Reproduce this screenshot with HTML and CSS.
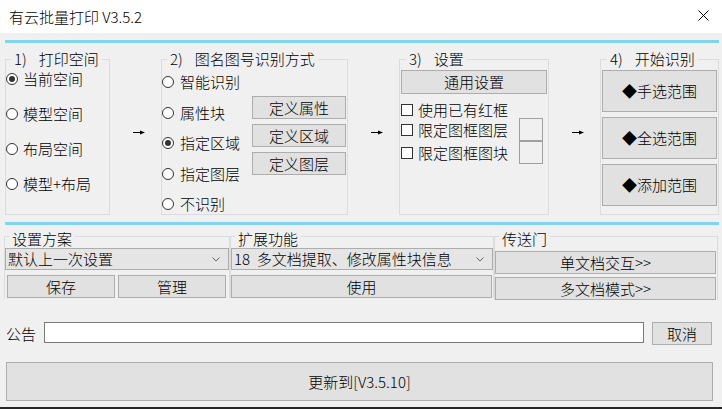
FILE: index.html
```html
<!DOCTYPE html>
<html>
<head>
  <meta charset="utf-8">
  <link rel="stylesheet" href="styles.css">
</head>
<body>
  <div class="titlebar">
    <span class="title">有云批量打印 V3.5.2</span>
    <svg class="close" width="11" height="11" viewBox="0 0 11 11"><path d="M0.5 0.5L10.5 10.5M10.5 0.5L0.5 10.5" stroke="#000" stroke-width="1" fill="none"/></svg>
  </div>

  <div class="main">
    <div class="sep"></div>

    <div class="steps">
      <fieldset class="group g1">
        <legend><span class="num">1)</span>打印空间</legend>
        <div class="g1-body">
          <label class="radio on"><i></i>当前空间</label>
          <label class="radio"><i></i>模型空间</label>
          <label class="radio"><i></i>布局空间</label>
          <label class="radio"><i></i>模型+布局</label>
        </div>
      </fieldset>

      <div class="arrow"><svg width="12" height="5" viewBox="0 0 12 5"><path d="M0 2.5H8" stroke="#000" stroke-width="1"/><path d="M7 0.5L12 2.5L7 4.5Z" fill="#000"/></svg></div>

      <fieldset class="group g2">
        <legend><span class="num">2)</span>图名图号识别方式</legend>
        <div class="g2-body">
          <div class="g2-radios">
            <label class="radio"><i></i>智能识别</label>
            <label class="radio"><i></i>属性块</label>
            <label class="radio on"><i></i>指定区域</label>
            <label class="radio"><i></i>指定图层</label>
            <label class="radio"><i></i>不识别</label>
          </div>
          <div class="g2-btns">
            <button class="btn">定义属性</button>
            <button class="btn">定义区域</button>
            <button class="btn">定义图层</button>
          </div>
        </div>
      </fieldset>

      <div class="arrow"><svg width="12" height="5" viewBox="0 0 12 5"><path d="M0 2.5H8" stroke="#000" stroke-width="1"/><path d="M7 0.5L12 2.5L7 4.5Z" fill="#000"/></svg></div>

      <fieldset class="group g3">
        <legend><span class="num">3)</span>设置</legend>
        <div class="g3-body">
          <button class="btn general">通用设置</button>
          <label class="check first"><i></i>使用已有红框</label>
          <label class="check"><i></i>限定图框图层<span class="slot"></span></label>
          <label class="check"><i></i>限定图框图块<span class="slot"></span></label>
        </div>
      </fieldset>

      <div class="arrow"><svg width="12" height="5" viewBox="0 0 12 5"><path d="M0 2.5H8" stroke="#000" stroke-width="1"/><path d="M7 0.5L12 2.5L7 4.5Z" fill="#000"/></svg></div>

      <fieldset class="group g4">
        <legend><span class="num">4)</span>开始识别</legend>
        <div class="g4-body">
          <button class="btn big">◆手选范围</button>
          <button class="btn big">◆全选范围</button>
          <button class="btn big">◆添加范围</button>
        </div>
      </fieldset>
    </div>

    <div class="sep"></div>

    <div class="tools">
      <fieldset class="group t1">
        <legend>设置方案</legend>
        <div class="combo">
          <span>默认上一次设置</span>
          <svg width="8" height="5" viewBox="0 0 8 5"><path d="M0.5 0.5L4 4L7.5 0.5" stroke="#666" stroke-width="1" fill="none"/></svg>
        </div>
        <div class="pair">
          <button class="btn half">保存</button>
          <button class="btn half">管理</button>
        </div>
      </fieldset>

      <fieldset class="group t2">
        <legend>扩展功能</legend>
        <div class="combo">
          <span>18&nbsp; 多文档提取、修改属性块信息</span>
          <svg width="8" height="5" viewBox="0 0 8 5"><path d="M0.5 0.5L4 4L7.5 0.5" stroke="#666" stroke-width="1" fill="none"/></svg>
        </div>
        <button class="btn use">使用</button>
      </fieldset>

      <fieldset class="group t3">
        <legend>传送门</legend>
        <div class="portal">
          <button class="btn">单文档交互&gt;&gt;</button>
          <button class="btn">多文档模式&gt;&gt;</button>
        </div>
      </fieldset>
    </div>

    <div class="notice">
      <span class="notice-label">公告</span>
      <div class="notice-box"></div>
      <button class="btn cancel">取消</button>
    </div>

    <button class="btn update">更新到[V3.5.10]</button>
  </div>

  <div class="taskbar"></div>
</body>
</html>
```

FILE: styles.css
```css
* {
  box-sizing: border-box;
}

body {
  margin: 0;
  width: 722px;
  height: 409px;
  overflow: hidden;
  background-color: #f0f0f0;
  font-family: "Noto Sans CJK SC", "Microsoft YaHei", sans-serif;
  font-size: 15px;
  font-weight: 300;
  line-height: 18px;
  color: #000;
}

/* barre de titre */
.titlebar {
  height: 33px;
  background-color: #fff;
  display: flex;
  align-items: center;
  justify-content: space-between;
  padding: 0 13px 0 9px;
}

.close {
  margin-top: -2px;
}

.main {
  padding-left: 5px;
}

.sep {
  width: 714px;
  height: 3px;
  margin-top: 7px;
  background-color: #80d4ee;
}

/* cadres */
.group {
  margin: 0;
  padding: 0;
  min-width: 0;
  border: 1px solid #dcdcdc;
}

.group legend {
  padding: 0 3px;
  margin-left: 5px;
}

.num {
  margin-right: 12px;
}

.btn {
  display: flex;
  align-items: center;
  justify-content: center;
  padding: 0;
  margin: 0;
  background-color: #e1e1e1;
  border: 1px solid #adadad;
  font-family: inherit;
  font-size: 15px;
  font-weight: 300;
  line-height: 18px;
  color: #000;
  white-space: nowrap;
}

.radio, .check {
  display: flex;
  align-items: center;
  gap: 5px;
  height: 18px;
  white-space: nowrap;
}

.radio i {
  width: 12px;
  height: 12px;
  border: 1px solid #333;
  border-radius: 50%;
  background-color: #fff;
  display: flex;
  align-items: center;
  justify-content: center;
}

.radio.on i::after {
  content: "";
  width: 6px;
  height: 6px;
  border-radius: 50%;
  background-color: #333;
}

.check i {
  width: 12px;
  height: 12px;
  border: 1px solid #333;
  background-color: #fff;
}

/* ligne des etapes */
.steps {
  display: flex;
  height: 165px;
  margin-top: 7px;
}

.steps .group {
  height: 165px;
}

.arrow {
  width: 51px;
  display: flex;
  align-items: center;
  padding-left: 23px;
}

.g1 { width: 105px; }
.g2 { width: 187px; }
.g3 { width: 150px; }
.g4 { width: 119px; }

.g1-body {
  display: flex;
  flex-direction: column;
  gap: 17px;
  padding-top: 2px;
}

.g2-body {
  display: flex;
}

.g2-radios {
  width: 90px;
  display: flex;
  flex-direction: column;
  gap: 12.5px;
  padding-top: 5px;
}

.g2-radios .radio {
  gap: 6px;
}

.g2-btns {
  display: flex;
  flex-direction: column;
  gap: 5px;
  padding-top: 28px;
}

.g2-btns .btn {
  width: 94px;
  height: 23px;
}

.g3 legend, .g4 legend {
  margin-left: 6px;
}

.g3-body {
  display: flex;
  flex-direction: column;
  padding: 2px 0 0 1px;
}

.general {
  width: 146px;
  height: 24px;
}

.check.first {
  height: 17px;
  margin-top: 7px;
}

.check {
  height: 23px;
}

.slot {
  width: 24px;
  height: 23px;
  margin-left: auto;
  margin-right: 5px;
  border: 1px solid #a0a0a0;
  background-color: #f0f0f0;
}

.g4-body {
  display: flex;
  flex-direction: column;
  gap: 5px;
  padding: 2px 0 0 1px;
}

.g4 .big {
  width: 115px;
  height: 42px;
}

/* ligne des outils */
.tools {
  display: flex;
  align-items: flex-start;
  height: 75px;
  margin-left: -1px;
}

.tools .group {
  border-bottom: none;
}

.tools .group legend {
  padding: 5px 3px 0;
  margin-left: 4px;
}

.t1 { width: 226px; }
.t2 { width: 264px; }
.t3 { width: 224px; }

.t3 legend {
  margin-left: 5px;
}

.combo {
  height: 22px;
  display: flex;
  align-items: center;
  justify-content: space-between;
  padding: 0 8px 0 2px;
  background-color: #e5e5e5;
  border: 1px solid #adadad;
  white-space: nowrap;
}

.pair {
  display: flex;
  gap: 3px;
  padding: 0 2px;
  margin-top: 5px;
}

.half {
  width: 108px;
  height: 23px;
}

.use {
  width: 261px;
  height: 23px;
  margin-top: 5px;
}

.portal {
  display: flex;
  flex-direction: column;
  gap: 3px;
  padding-top: 3px;
}

.portal .btn {
  width: 221px;
  height: 23px;
}

/* annonce */
.notice {
  display: flex;
  align-items: flex-start;
  height: 23px;
  margin-top: 22px;
}

.notice-label {
  width: 39px;
  padding-left: 1px;
  line-height: 23px;
}

.notice-box {
  width: 600px;
  height: 21px;
  margin-right: 8px;
  background-color: #fff;
  border: 1px solid #7a7a7a;
}

.cancel {
  width: 60px;
  height: 23px;
}

.update {
  width: 707px;
  height: 39px;
  margin: 17px 0 0 1px;
}

.taskbar {
  height: 2px;
  margin-top: 6px;
  background-color: #262626;
}
```
